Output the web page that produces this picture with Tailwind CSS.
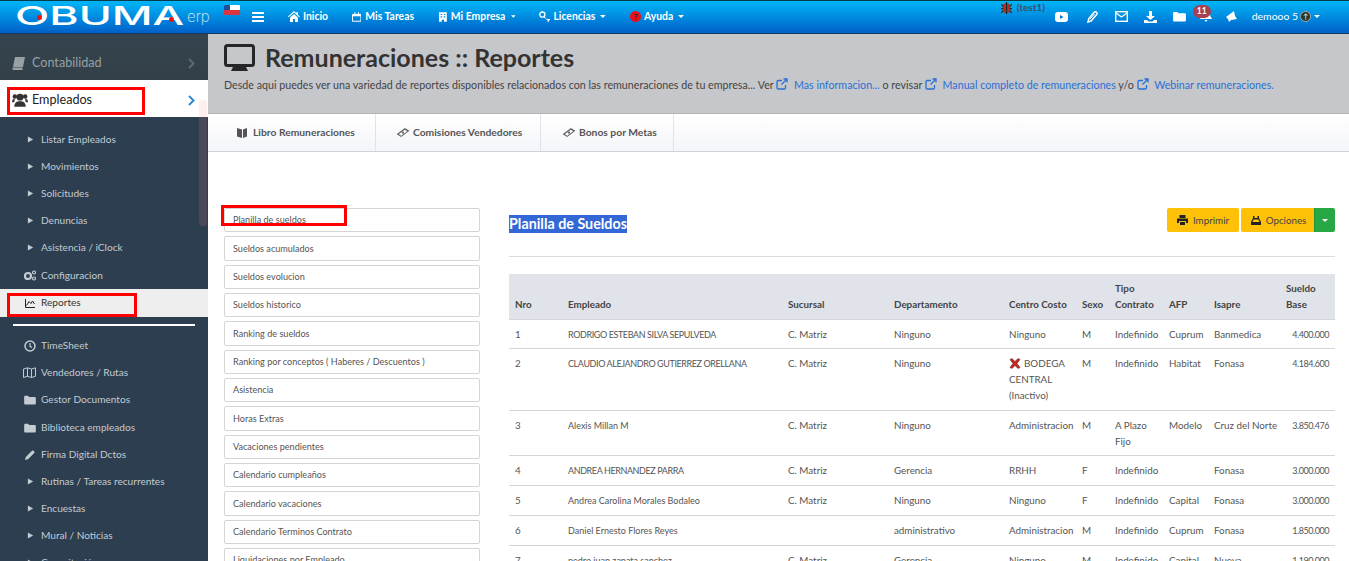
<!DOCTYPE html>
<html lang="en">
<head>
  <meta charset="UTF-8" />
  <title>Remuneraciones :: Reportes</title>
  <script src="https://cdn.jsdelivr.net/npm/@tailwindcss/browser@4"></script>
</head>
<body class="relative h-[561px] w-[1349px] overflow-hidden bg-white font-['Lato',sans-serif] text-[9.800px] text-[#555]">

  <!-- icon sprite -->
  <svg class="hidden">
    <symbol id="tri" viewBox="0 0 8 8"><path d="M1 0.5 7 4 1 7.5z" fill="currentColor"/></symbol>
    <symbol id="caret" viewBox="0 0 8 4"><path d="M0 0h8L4 4z" fill="currentColor"/></symbol>
    <symbol id="folder" viewBox="0 0 14 12"><path d="M0 2.500C0 1.500.5 1 1.500 1h3L6 2.500h6.500c1 0 1.500.5 1.500 1.500V10c0 1-.5 1.500-1.500 1.500h-11C.5 11.500 0 11 0 10z" fill="currentColor"/></symbol>
    <symbol id="ext" viewBox="0 0 12 12"><path d="M9.500 7v2.800c0 .7-.5 1.200-1.200 1.200H2.200C1.500 11 1 10.500 1 9.800V3.700c0-.7.5-1.200 1.200-1.200H6" fill="none" stroke="currentColor" stroke-width="1.300"/><path d="M7.500 1H11v3.500M11 1 5.500 6.500" fill="none" stroke="currentColor" stroke-width="1.300"/></symbol>
    <symbol id="bills" viewBox="0 0 14 12"><path d="M0 8 9 1l5 3-9 7z" fill="#666"/><path d="M2.500 8 9 3l2.500 1.500L5 9.500z" fill="#fff"/><circle cx="7" cy="6.200" r="1.200" fill="#666"/></symbol>
  </svg>

  <!-- Top bar -->
  <nav class="flex h-[34px] items-center whitespace-nowrap border-t border-b border-t-[#0d3a4a] border-b-[#123a5c] bg-gradient-to-b from-[#00b6f6] to-[#0060c9] text-[10.400px] font-bold text-white">
    <div class="relative h-full w-[224px] shrink-0">
      <span class="absolute left-[15px] top-[1px] origin-left scale-x-[1.72] font-['Inter',sans-serif] text-[26px] leading-[28px] font-medium">OBUMA</span>
      <span class="absolute left-[187px] top-[6px] font-['Inter',sans-serif] text-[15px] leading-[20px] font-extralight text-white/80">erp</span>
      <span class="absolute left-[37px] top-[14px] size-[5px] rounded-full bg-[#e11]"></span>
      <span class="absolute left-[169px] top-[16px] size-[5px] rounded-full bg-[#e11]"></span>
    </div>
    <!-- flag -->
    <div class="mb-[14px] flex h-[10px] w-[16px] shrink-0 flex-col overflow-hidden rounded-[1px]">
      <div class="relative h-1/2 bg-white"><span class="absolute left-0 top-0 h-full w-[6px] bg-[#1b4fa0]"></span></div>
      <div class="h-1/2 bg-[#d9343f]"></div>
    </div>
    <svg class="ml-[12px] shrink-0" width="12" height="10" viewBox="0 0 12 10"><path d="M0 0h12v2H0zM0 4h12v2H0zM0 8h12v2H0z" fill="#fff"/></svg>
    <a class="ml-[24px] flex w-[40px] items-center gap-[3px]">
      <svg width="12" height="11" viewBox="0 0 12 11"><path d="M6 0 0 5.500l.7.7L6 1.500l5.300 4.700.7-.7-2-1.800V1H8.500v1.300zM2 6.500V11h3V8h2v3h3V6.500L6 3z" fill="#fff"/></svg>Inicio</a>
    <a class="ml-[24px] flex w-[62px] items-center gap-[4px]">
      <svg width="11" height="12" viewBox="0 0 12 12"><path d="M1 2h2V0h1.500v2h3V0H9v2h2a1 1 0 0 1 1 1v8a1 1 0 0 1-1 1H1a1 1 0 0 1-1-1V3a1 1 0 0 1 1-1zm.2 3v5.800h9.600V5z" fill="#fff"/></svg>Mis Tareas</a>
    <a class="ml-[25px] flex w-[77px] items-center gap-[4px]">
      <svg width="10" height="12" viewBox="0 0 10 12"><path d="M0 0h10v12H6.500V9.500h-3V12H0zM2 2v1.500h2V2zm4 0v1.500h2V2zM2 5v1.500h2V5zm4 0v1.500h2V5z" fill="#fff" fill-rule="evenodd"/></svg>Mi Empresa<svg class="ml-[2px]" width="6" height="3"><use href="#caret"/></svg></a>
    <a class="ml-[23px] flex w-[67px] items-center gap-[3px]">
      <svg width="12" height="11" viewBox="0 0 12 11"><circle cx="3.500" cy="3.500" r="2.700" fill="none" stroke="#fff" stroke-width="1.400"/><path d="M5.500 5.500 8 8h4v1.500h-1.500V11H9V9.500L4.800 6.200z" fill="#fff"/></svg>Licencias<svg class="ml-[2px]" width="6" height="3"><use href="#caret"/></svg></a>
    <a class="ml-[24px] flex items-center gap-[3px]">
      <span class="flex size-[11px] items-center justify-center rounded-full bg-[#e8101c] text-[8px] leading-none text-[#222]">?</span>Ayuda<svg class="ml-[2px]" width="6" height="3"><use href="#caret"/></svg></a>

    <!-- right side -->
    <div class="relative ml-auto mr-[29px] flex items-center font-normal">
      <div class="absolute left-[-54px] top-[-9px] flex items-center gap-[5px] text-[10px] leading-[14px] font-bold text-[#3a5068]">
        <svg width="11" height="13" viewBox="0 0 10 12"><ellipse cx="5" cy="6.500" rx="3.700" ry="5" fill="#b6301e"/><path d="M5 1v11M0 3l2 2M10 3 8 5M0 7h2M8 7h2M0 11l2-2M10 11 8 9" stroke="#222" stroke-width="1"/></svg>(test1)
      </div>
      <svg width="13" height="10" viewBox="0 0 13 10"><rect width="13" height="10" rx="3" fill="#fff"/><path d="M5 3v4l3.500-2z" fill="#0a7ad6"/></svg>
      <svg class="ml-[19px]" width="11" height="12" viewBox="0 0 11 12"><path d="M1 11l.8-3.500L7 1.500c.8-.9 1.700-.9 2.500-.2s.8 1.700 0 2.500L4 10z" fill="none" stroke="#fff" stroke-width="1.500"/><path d="M3 8 7.500 3" stroke="#fff"/></svg>
      <svg class="ml-[17px]" width="13" height="11" viewBox="0 0 13 11"><rect x=".7" y=".7" width="11.600" height="9.600" fill="none" stroke="#fff" stroke-width="1.400"/><path d="M1 2l5.500 4L12 2" fill="none" stroke="#fff" stroke-width="1.300"/></svg>
      <svg class="ml-[16px]" width="13" height="12" viewBox="0 0 13 12"><path d="M5 0h3v5h3L6.500 9 2 5h3zM0 9h3l1.500 1.500h4L10 9h3v3H0z" fill="#fff"/></svg>
      <svg class="ml-[16px] text-white" width="13" height="11"><use href="#folder"/></svg>
      <div class="relative ml-[14px] h-[14px] w-[12px]">
        <svg class="absolute left-0 top-[-1px]" width="12" height="13" viewBox="0 0 12 13"><path d="M6 1a4 4 0 0 1 4 4c0 3 2 4 2 5H0c0-1 2-2 2-5a4 4 0 0 1 4-4zM4.500 11h3L6 13z" fill="#fff"/></svg>
        <span class="absolute left-[-7px] top-[-5px] flex h-[13px] w-[18px] items-center justify-center rounded-full bg-[#a8414f] text-[8.500px] font-bold leading-none text-white">11</span>
      </div>
      <svg class="ml-[14px]" width="11" height="11" viewBox="0 0 11 11"><path d="M0 6 8 0l1 5 2 3-6 1-2 2-1-3z" fill="#fff"/></svg>
      <span class="ml-[15px]">demooo 5</span>
      <span class="ml-[2px] flex size-[11px] items-center justify-center rounded-full border border-[#aaa] bg-[#1f3a2f] text-[7px] leading-none text-white">↑</span>
      <svg class="ml-[3px]" width="6" height="3"><use href="#caret"/></svg>
    </div>
  </nav>

  <div class="flex h-[527px]">
    <!-- Sidebar -->
    <aside class="relative w-[208px] shrink-0 overflow-hidden bg-[#2c3e50] text-[10.100px] text-[#c3cbd3]">
      <div class="flex h-[46px] items-center bg-gradient-to-b from-[#34454f] to-[#333f48] pl-[12px] pr-[13px] pt-[12px] text-[12.600px] text-[#97a0a5]">
        <svg width="14" height="13" viewBox="0 0 14 13"><path d="M3 0h10l-2 10H1zM1 10.500h9.500V13H1.500C0 13 0 10.500 1 10.500z" fill="#97a0a5"/></svg>
        <span class="ml-[6px]">Contabilidad</span>
        <svg class="ml-auto" width="7" height="11" viewBox="0 0 7 11"><path d="M1 1l4.500 4.500L1 10" fill="none" stroke="#5d6a72" stroke-width="2"/></svg>
      </div>
      <div class="flex h-[37px] items-center bg-white pl-[12px] pr-[13px] pt-[3px] text-[12.600px] text-[#222]">
        <svg width="16" height="14" viewBox="0 0 14 12"><circle cx="7" cy="3.500" r="3" fill="#333"/><path d="M2 12c0-4 2-5 5-5s5 1 5 5z" fill="#333"/><circle cx="2.500" cy="3" r="2" fill="#333"/><circle cx="11.500" cy="3" r="2" fill="#333"/><path d="M0 8c0-2 1-3 2.500-3L2 8zM14 8c0-2-1-3-2.500-3l.5 3z" fill="#333"/></svg>
        <span class="ml-[4px]">Empleados</span>
        <svg class="ml-auto" width="7" height="11" viewBox="0 0 7 11"><path d="M1 1l4.500 4.500L1 10" fill="none" stroke="#2f86d8" stroke-width="2"/></svg>
      </div>
      <ul class="mt-[9px]">
        <li class="flex h-[27px] items-center pl-[27px]"><svg class="mr-[7px]" width="7" height="7"><use href="#tri"/></svg>Listar Empleados</li>
        <li class="flex h-[27px] items-center pl-[27px]"><svg class="mr-[7px]" width="7" height="7"><use href="#tri"/></svg>Movimientos</li>
        <li class="flex h-[27px] items-center pl-[27px]"><svg class="mr-[7px]" width="7" height="7"><use href="#tri"/></svg>Solicitudes</li>
        <li class="flex h-[27px] items-center pl-[27px]"><svg class="mr-[7px]" width="7" height="7"><use href="#tri"/></svg>Denuncias</li>
        <li class="flex h-[27px] items-center pl-[27px]"><svg class="mr-[7px]" width="7" height="7"><use href="#tri"/></svg>Asistencia / iClock</li>
        <li class="flex h-[28px] items-center pl-[24px] pt-[1px]"><svg class="mr-[5px]" width="12" height="11" viewBox="0 0 12 11"><circle cx="4" cy="6" r="3" fill="none" stroke="currentColor" stroke-width="2.200"/><circle cx="10" cy="2.500" r="1.500" fill="none" stroke="currentColor" stroke-width="1.200"/><circle cx="10" cy="8.500" r="1.500" fill="none" stroke="currentColor" stroke-width="1.200"/></svg>Configuracion</li>
        <li class="flex h-[28px] items-center bg-[#eeeeee] pl-[25px] text-[#333]"><svg class="mr-[6px]" width="10" height="9" viewBox="0 0 10 9"><path d="M.5 0v8.500H10" fill="none" stroke="#222"/><path d="M1.500 6.500 4 2.500 6 4.500 7.500 2 9.500 5" fill="none" stroke="#222"/></svg>Reportes</li>
      </ul>
      <div class="ml-[13px] mt-[7px] h-[2px] w-[182px] bg-white"></div>
      <ul class="mt-[6px]">
        <li class="flex h-[27px] items-center pl-[24px]"><svg class="mr-[5px]" width="12" height="12" viewBox="0 0 12 12"><circle cx="6" cy="6" r="5" fill="none" stroke="currentColor" stroke-width="1.500"/><path d="M6 3v3.300l2 1.300" fill="none" stroke="currentColor" stroke-width="1.200"/></svg>TimeSheet</li>
        <li class="flex h-[27px] items-center pl-[23px]"><svg class="mr-[5px]" width="13" height="11" viewBox="0 0 13 11"><path d="M.5 2 4.500.8l4 1.200 4-1.200v8.500l-4 1.200-4-1.200-4 1.200zM4.500 1v8.500M8.500 2v8.500" fill="none" stroke="currentColor"/></svg>Vendedores / Rutas</li>
        <li class="flex h-[28px] items-center pl-[24px]"><svg class="mr-[5px]" width="12" height="10"><use href="#folder"/></svg>Gestor Documentos</li>
        <li class="flex h-[27px] items-center pl-[24px]"><svg class="mr-[5px]" width="12" height="10"><use href="#folder"/></svg>Biblioteca empleados</li>
        <li class="flex h-[27px] items-center pl-[25px]"><svg class="mr-[6px]" width="10" height="10" viewBox="0 0 10 10"><path d="M0 10l.8-3L7 .8c.5-.5 1-.5 1.500 0l.7.7c.5.500.5 1 0 1.500L3 9.200z" fill="currentColor"/></svg>Firma Digital Dctos</li>
        <li class="flex h-[27px] items-center pl-[27px]"><svg class="mr-[7px]" width="7" height="7"><use href="#tri"/></svg>Rutinas / Tareas recurrentes</li>
        <li class="flex h-[27px] items-center pl-[27px]"><svg class="mr-[7px]" width="7" height="7"><use href="#tri"/></svg>Encuestas</li>
        <li class="flex h-[27px] items-center pl-[27px]"><svg class="mr-[7px]" width="7" height="7"><use href="#tri"/></svg>Mural / Noticias</li>
        <li class="flex h-[27px] items-center pl-[27px]"><svg class="mr-[7px]" width="7" height="7"><use href="#tri"/></svg>Capacitación</li>
      </ul>
      <!-- scrollbar -->
      <div class="absolute left-[199px] top-[66px] h-[126px] w-[8px] rounded-[3px] bg-[#ff9090]/15"></div>
    </aside>

    <!-- Main -->
    <main class="min-w-0 flex-1">
      <header class="h-[80px] border-b border-[#b4b5b9] bg-[#c6c7cb] pl-[16px] pt-[8px]">
        <div class="flex h-[30px] items-center">
          <svg class="shrink-0" width="31" height="27" viewBox="0 0 31 27"><rect x="1.500" y="1.500" width="28" height="20" rx="2" fill="none" stroke="#262626" stroke-width="3"/><path d="M9 23h13l2 4H7z" fill="#262626"/></svg>
          <h1 class="ml-[10px] text-[25px] leading-[30px] font-bold text-[#333]">Remuneraciones :: Reportes</h1>
        </div>
        <p class="mt-[5px] whitespace-nowrap text-[10.700px] leading-[16px] text-[#444]">
          Desde aqui puedes ver una variedad de reportes disponibles relacionados con las remuneraciones de tu empresa... Ver
          <svg class="mr-[3px] inline align-[-1px] text-[#2a6fd6]" width="12" height="12"><use href="#ext"/></svg> <a class="text-[#2a6fd6]">Mas informacion...</a> o revisar
          <svg class="mr-[3px] inline align-[-1px] text-[#2a6fd6]" width="12" height="12"><use href="#ext"/></svg> <a class="text-[#2a6fd6]">Manual completo de remuneraciones</a> y/o
          <svg class="mr-[3px] inline align-[-1px] text-[#2a6fd6]" width="12" height="12"><use href="#ext"/></svg> <a class="text-[#2a6fd6]">Webinar remuneraciones.</a>
        </p>
      </header>

      <div class="flex h-[38px] border-b border-[#cfd0d8] bg-gradient-to-b from-white to-[#f4f5fa] text-[10.300px] font-bold text-[#555]">
        <a class="flex w-[168px] items-center gap-[6px] border-r border-[#e2e3e8] pl-[29px]"><svg width="10" height="11" viewBox="0 0 10 11"><path d="M0 1l5 1.500V11L0 9.500zM6 2.500 10 1v8.500L6 11z" fill="#555"/></svg>Libro Remuneraciones</a>
        <a class="flex w-[165px] items-center gap-[3px] border-r border-[#e2e3e8] pl-[20px]"><svg width="14" height="11"><use href="#bills"/></svg>Comisiones Vendedores</a>
        <a class="flex w-[133px] items-center gap-[3px] border-r border-[#e2e3e8] pl-[21px]"><svg width="14" height="11"><use href="#bills"/></svg>Bonos por Metas</a>
      </div>

      <div class="flex pl-[16px] pr-[14px] pt-[56px]">
        <!-- report list -->
        <ul class="flex w-[256px] shrink-0 flex-col gap-[4px] text-[9.100px] text-[#555]">
          <li class="flex h-[24.350px] items-center rounded-[2px] border border-[#d5d5d5] pl-[8px]">Planilla de sueldos</li>
          <li class="flex h-[24.350px] items-center rounded-[2px] border border-[#d5d5d5] pl-[8px]">Sueldos acumulados</li>
          <li class="flex h-[24.350px] items-center rounded-[2px] border border-[#d5d5d5] pl-[8px]">Sueldos evolucion</li>
          <li class="flex h-[24.350px] items-center rounded-[2px] border border-[#d5d5d5] pl-[8px]">Sueldos historico</li>
          <li class="flex h-[24.350px] items-center rounded-[2px] border border-[#d5d5d5] pl-[8px]">Ranking de sueldos</li>
          <li class="flex h-[24.350px] items-center rounded-[2px] border border-[#d5d5d5] pl-[8px]">Ranking por conceptos ( Haberes / Descuentos )</li>
          <li class="flex h-[24.350px] items-center rounded-[2px] border border-[#d5d5d5] pl-[8px]">Asistencia</li>
          <li class="flex h-[24.350px] items-center rounded-[2px] border border-[#d5d5d5] pl-[8px]">Horas Extras</li>
          <li class="flex h-[24.350px] items-center rounded-[2px] border border-[#d5d5d5] pl-[8px]">Vacaciones pendientes</li>
          <li class="flex h-[24.350px] items-center rounded-[2px] border border-[#d5d5d5] pl-[8px]">Calendario cumpleaños</li>
          <li class="flex h-[24.350px] items-center rounded-[2px] border border-[#d5d5d5] pl-[8px]">Calendario vacaciones</li>
          <li class="flex h-[24.350px] items-center rounded-[2px] border border-[#d5d5d5] pl-[8px]">Calendario Terminos Contrato</li>
          <li class="flex h-[24.350px] items-center rounded-[2px] border border-[#d5d5d5] pl-[8px]">Liquidaciones por Empleado</li>
        </ul>

        <!-- report -->
        <section class="ml-[29px] w-[826px] shrink-0">
          <div class="flex h-[49px] items-start justify-between border-b border-[#dcdcdc]">
            <h2 class="mt-[7px] bg-[#3367d6] text-[14.300px] leading-[18px] font-bold text-white">Planilla de Sueldos</h2>
            <div class="flex">
              <button class="flex h-[24px] w-[72px] items-center justify-center gap-[5px] rounded-[2px] bg-[#ffc107] text-[#444]"><svg width="11" height="10" viewBox="0 0 11 10"><path d="M2.500 0h6v3h-6zM0 3.500h11V8H9V6H2v2H0zM3 7h5v3H3z" fill="#222"/></svg>Imprimir</button>
              <button class="ml-[2px] flex h-[24px] w-[73px] items-center justify-center gap-[5px] rounded-l-[2px] bg-[#ffc107] pl-[2px] text-[#444]"><svg width="10" height="9" viewBox="0 0 10 9"><path d="M2 0h1.500v2h3V0H8v2l2 4v3H0V6l2-4zM1.500 6h7L7.500 3.500h-5z" fill="#222" fill-rule="evenodd"/></svg>Opciones</button>
              <button class="flex h-[24px] w-[21px] items-center justify-center rounded-r-[2px] border-l border-[#23923d] bg-[#28a745]"><svg class="text-white" width="6" height="3"><use href="#caret"/></svg></button>
            </div>
          </div>

          <table class="mt-[17px] w-[826px] table-fixed border-collapse text-left leading-[15.800px] text-[#555]">
            <colgroup><col class="w-[53px]"><col class="w-[220px]"><col class="w-[106px]"><col class="w-[115px]"><col class="w-[73px]"><col class="w-[33px]"><col class="w-[54px]"><col class="w-[45px]"><col class="w-[72px]"><col class="w-[55px]"></colgroup>
            <thead class="bg-[#e0e3ea] font-bold text-[#444]">
              <tr class="border-b border-[#d5d5d5] [&>th]:px-[6px] [&>th]:pt-[7px] [&>th]:pb-[6px] [&>th]:align-bottom">
                <th>Nro</th><th>Empleado</th><th>Sucursal</th><th>Departamento</th><th>Centro Costo</th><th>Sexo</th><th>Tipo Contrato</th><th>AFP</th><th>Isapre</th><th>Sueldo Base</th>
              </tr>
            </thead>
            <tbody class="[&_td]:px-[6px] [&_td]:pt-[7px] [&_td]:pb-[6px] [&_td]:align-top [&_td:last-child]:text-right [&_td:last-child]:text-[9px] [&_td:last-child]:tracking-[-0.45px] [&_td:nth-child(2)]:text-[9px] [&_tr]:border-b [&_tr]:border-[#d5d5d5]">
              <tr><td>1</td><td class="whitespace-nowrap tracking-[-0.4px]">RODRIGO ESTEBAN SILVA SEPULVEDA</td><td>C. Matriz</td><td>Ninguno</td><td>Ninguno</td><td>M</td><td>Indefinido</td><td>Cuprum</td><td>Banmedica</td><td>4.400.000</td></tr>
              <tr><td>2</td><td class="whitespace-nowrap tracking-[-0.4px]">CLAUDIO ALEJANDRO GUTIERREZ ORELLANA</td><td>C. Matriz</td><td>Ninguno</td><td><svg class="mr-[3px] inline align-[-2px]" width="12" height="11" viewBox="0 0 12 11"><path d="M1 1.500 3 .5 6 3.500 9 .5l2 1L8 5.500l3 4-2 1-3-3-3 3-2-1 3-4z" fill="#c8281e" stroke="#5a1410" stroke-width=".5"/></svg>BODEGA CENTRAL (Inactivo)</td><td>M</td><td>Indefinido</td><td>Habitat</td><td>Fonasa</td><td>4.184.600</td></tr>
              <tr><td>3</td><td>Alexis Millan M</td><td>C. Matriz</td><td>Ninguno</td><td>Administracion</td><td>M</td><td>A Plazo Fijo</td><td>Modelo</td><td class="whitespace-nowrap">Cruz del Norte</td><td>3.850.476</td></tr>
              <tr><td>4</td><td class="whitespace-nowrap tracking-[-0.4px]">ANDREA HERNANDEZ PARRA</td><td>C. Matriz</td><td>Gerencia</td><td>RRHH</td><td>F</td><td>Indefinido</td><td></td><td>Fonasa</td><td>3.000.000</td></tr>
              <tr><td>5</td><td>Andrea Carolina Morales Bodaleo</td><td>C. Matriz</td><td>Ninguno</td><td>Ninguno</td><td>F</td><td>Indefinido</td><td>Capital</td><td>Fonasa</td><td>3.000.000</td></tr>
              <tr><td>6</td><td>Daniel Ernesto Flores Reyes</td><td></td><td>administrativo</td><td>Administracion</td><td>M</td><td>Indefinido</td><td>Cuprum</td><td>Fonasa</td><td>1.850.000</td></tr>
              <tr><td>7</td><td>pedro juan zapata sanchez</td><td>C. Matriz</td><td>Gerencia</td><td>Ninguno</td><td>M</td><td>Indefinido</td><td>Capital</td><td>Nueva</td><td>1.190.000</td></tr>
            </tbody>
          </table>
        </section>
      </div>
    </main>
  </div>

  <!-- red annotation boxes drawn on top of the screenshot -->
  <div class="pointer-events-none absolute left-[7px] top-[87px] h-[28px] w-[138px] border-[3px] border-[#f00]"></div>
  <div class="pointer-events-none absolute left-[7px] top-[293px] h-[24px] w-[130px] border-[3px] border-[#f00]"></div>
  <div class="pointer-events-none absolute left-[221px] top-[205px] h-[21px] w-[126px] border-[3px] border-[#f00]"></div>
</body>
</html>
